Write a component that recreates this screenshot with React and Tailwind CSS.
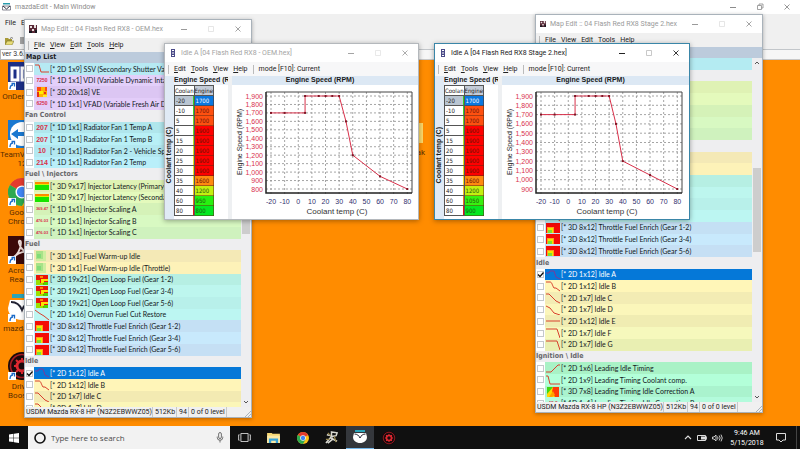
import React, { useState } from 'react'

const fuelRows = [
  { label: '[* 3D 1x1] Fuel Warm-up Idle', icon: 'fade', bg: 'bg-[#f4e9b6]' },
  { label: '[* 3D 1x1] Fuel Warm-up Idle (Throttle)', icon: 'fade', bg: 'bg-[#fdf2b8]' },
  { label: '[* 3D 19x21] Open Loop Fuel (Gear 1-2)', icon: 'loop', bg: 'bg-[#b6efe3]' },
  { label: '[* 3D 19x21] Open Loop Fuel (Gear 3-4)', icon: 'loop', bg: 'bg-[#bdf6ee]' },
  { label: '[* 3D 19x21] Open Loop Fuel (Gear 5-6)', icon: 'loop', bg: 'bg-[#b8f0ea]' },
  { label: '[* 2D 1x16] Overrun Fuel Cut Restore', icon: 'fall', bg: 'bg-[#bcf6f2]' },
  { label: '[* 3D 8x12] Throttle Fuel Enrich (Gear 1-2)', icon: 'corner', bg: 'bg-[#c4e0f4]' },
  { label: '[* 3D 8x12] Throttle Fuel Enrich (Gear 3-4)', icon: 'corner', bg: 'bg-[#c8e9fc]' },
  { label: '[* 3D 8x12] Throttle Fuel Enrich (Gear 5-6)', icon: 'corner', bg: 'bg-[#c5dff4]' },
]

const injectorRows = [
  { label: '[* 3D 9x17] Injector Latency (Primary)', icon: 'bands', bg: 'bg-[#dff2b4]' },
  { label: '[* 3D 9x17] Injector Latency (Secondary)', icon: 'bands', bg: 'bg-[#e4fabc]' },
  { label: '[* 1D 1x1] Injector Scaling A', tiny: '369.47', bg: 'bg-[#d5f2b8]' },
  { label: '[* 1D 1x1] Injector Scaling B', tiny: '476.03', bg: 'bg-[#d8f9c2]' },
  { label: '[* 1D 1x1] Injector Scaling C', tiny: '476.03', bg: 'bg-[#cff2be]' },
]

const oemRows = [
  { label: '[* 2D 1x9] SSV (Secondary Shutter Valve)', icon: 'step', bg: 'bg-[#b6e9f3]' },
  { label: '[* 1D 1x1] VDI (Variable Dynamic Intake) V', small: '7250', bg: 'bg-[#e3cffa]' },
  { label: '[* 3D 20x18] VE', icon: 've', bg: 'bg-[#dcc6f3]' },
  { label: '[* 1D 1x1] VFAD (Variable Fresh Air Duct)', small: '6250', bg: 'bg-[#e3cdf9]' },
  { group: 'Fan Control' },
  { label: '[* 1D 1x1] Radiator Fan 1 Temp A', big: '207', bg: 'bg-[#b0e6ec]' },
  { label: '[* 1D 1x1] Radiator Fan 1 Temp B', big: '207', bg: 'bg-[#b8f0f6]' },
  { label: '[* 1D 1x1] Radiator Fan 2 - Vehicle Speed', big: '10', bg: 'bg-[#b3e8f0]' },
  { label: '[* 1D 1x1] Radiator Fan 2 Temp', big: '214', bg: 'bg-[#b9effa]' },
  { group: 'Fuel \\ Injectors' },
  ...injectorRows,
  { group: 'Fuel' },
  ...fuelRows,
  { group: 'Idle' },
  { label: '[* 2D 1x12] Idle A', icon: 'idleA', selected: true },
  { label: '[* 2D 1x12] Idle B', icon: 'idleB', bg: 'bg-[#fff5b8]' },
  { label: '[* 2D 1x7] Idle C', icon: 'idleC', bg: 'bg-[#f3eab2]' },
  { label: '[* 2D 1x7] Idle D', icon: 'idleC', bg: 'bg-[#fbf6b8]' },
]

const stageRows = [
  { label: '[* 1D 1x1] Radiator Fan 2 Temp', big: '214', bg: 'bg-[#b4ebf2]' },
  { group: 'Fuel \\ Injectors' },
  ...injectorRows,
  { group: 'Fuel' },
  ...fuelRows,
  { group: 'Idle' },
  { label: '[* 2D 1x12] Idle A', icon: 'idleA', selected: true },
  { label: '[* 2D 1x12] Idle B', icon: 'idleB', bg: 'bg-[#fff6b8]' },
  { label: '[* 2D 1x7] Idle C', icon: 'idleC', bg: 'bg-[#f3ecb4]' },
  { label: '[* 2D 1x7] Idle D', icon: 'idleD', bg: 'bg-[#fbf6ba]' },
  { label: '[* 2D 1x12] Idle E', icon: 'flat', bg: 'bg-[#f0ecb2]' },
  { label: '[* 2D 1x7] Idle F', icon: 'drop', bg: 'bg-[#f6f8bc]' },
  { label: '[* 2D 1x7] Idle G', icon: 'drop', bg: 'bg-[#e9efb2]' },
  { group: 'Ignition \\ Idle' },
  { label: '[* 2D 1x6] Leading Idle Timing', icon: 'rise', bg: 'bg-[#a9f2c6]' },
  { label: '[* 2D 1x9] Leading Timing Coolant comp.', icon: 'cool', bg: 'bg-[#b3ffd9]' },
  { label: '[* 3D 7x8] Leading Timing Idle Correction A', icon: 'diag', bg: 'bg-[#aaf3ce]' },
  { label: '[* 1D 1x1] Leading Timing Idle Correction B', small: '40.0', bg: 'bg-[#b3fbdc]' },
]

const lineIcons = {
  step: 'M0 2h4l2 7h8',
  fall: 'M0 1l4 3 5 3 5 4',
  idleA: 'M0 4h3l1-2h4l2 6 4 2',
  idleB: 'M0 2h4c2 0 2 3 4 6h2l4 3',
  idleC: 'M0 2h3l3 3 4 4 4 2',
  idleD: 'M0 2l4 2 4 5 6 2',
  flat: 'M0 6h14',
  drop: 'M0 2h11l3 9',
  rise: 'M0 10h5l7-7h2',
  cool: 'M0 2h2l2 8h10',
}

function RowIcon({ name }) {
  if (lineIcons[name]) {
    return (
      <svg viewBox="0 0 14 12" className="h-3 w-[14px]" fill="none" stroke={name === 'idleA' ? '#7a3a9a' : '#d8402e'} strokeWidth="1">
        <path d={lineIcons[name]} />
      </svg>
    )
  }
  return (
    <svg viewBox="0 0 14 10" className="h-[10px] w-[14px]">
      {name === 'bands' && (
        <>
          <path d="M0 1h14v8H0z" fill="#18e400" />
          <path d="M0 1h14v2H0z" fill="#ff8a00" />
          <path d="M0 3h14v1H0z" fill="#d8f000" />
        </>
      )}
      {name === 'fade' && (
        <>
          <path d="M1 0h10v10H1z" fill="#cdeea0" />
          <path d="M1 0h7v8H1z" fill="#a8e288" />
          <path d="M2 3h4v4H2z" fill="#82dc78" />
        </>
      )}
      {name === 'loop' && (
        <>
          <path d="M1 0h12v10H1z" fill="#e81408" />
          <path d="M1 5h4v3h3v2H1z" fill="#9be000" />
          <path d="M6 4h7v2H9v2H6z" fill="#ffe000" />
          <path d="M9 7h4v3H8z" fill="#4fd800" />
          <path d="M5 1h3v2H5z" fill="#ff8a00" />
        </>
      )}
      {name === 'corner' && (
        <>
          <path d="M0 0h14v10H0z" fill="#f40a06" />
          <path d="M1 4h7v6H1z" fill="#ff9a20" />
          <path d="M2 5h5v5H2z" fill="#f0e800" />
          <path d="M2 7h4v3H2z" fill="#7fe030" />
        </>
      )}
      {name === 've' && (
        <>
          <path d="M2 0h10v10H2z" fill="#ffb000" />
          <path d="M2 0h4v4H2zM10 0h2v4h-2z" fill="#ff4a10" />
          <path d="M4 4h4v3H4z" fill="#ffee00" />
          <path d="M2 5h2v5H2zM9 5h2v2H9z" fill="#e83010" />
          <path d="M8 8h4v2H8z" fill="#ffe830" />
        </>
      )}
      {name === 'diag' && (
        <>
          <path d="M1 0h12v10H1z" fill="#ffd800" />
          <path d="M1 0h6L1 7z" fill="#40d810" />
          <path d="M7 0h6v10H9L6 5z" fill="#ff3a08" />
          <path d="M7 4l2 4-3 2H3z" fill="#ffa000" />
        </>
      )}
    </svg>
  )
}

function MapRow({ row }) {
  const [checked, setChecked] = useState(!!row.selected)

  if (row.group) {
    return (
      <div className="flex min-h-0 flex-1 items-center bg-[#eeeef0] font-['DejaVu_Sans_Condensed','DejaVu_Sans',sans-serif] text-[7px] font-bold text-[#66666a]">
        {row.group}
      </div>
    )
  }
  return (
    <label className={`flex min-h-0 flex-1 items-center whitespace-nowrap ${row.selected ? 'text-white' : 'text-[#12181c]'}`}>
      <span className="grid h-full w-[9px] shrink-0 place-items-center bg-white">
        <input
          type="checkbox"
          checked={checked}
          onChange={(e) => setChecked(e.target.checked)}
          className="col-start-1 row-start-1 h-[7px] w-[7px] appearance-none border border-[#c4c8cc] bg-white"
        />
        {checked && (
          <svg viewBox="0 0 7 7" className="pointer-events-none col-start-1 row-start-1 h-[7px] w-[7px]" fill="none" stroke="#111" strokeWidth="1.3">
            <path d="M1 3.5l2 2 3.5-4" />
          </svg>
        )}
      </span>
      <span className={`flex h-full min-w-0 flex-1 items-center gap-px overflow-hidden pl-px ${row.selected ? 'bg-[#0578d8]' : row.bg}`}>
        <span className="flex h-full w-[14px] shrink-0 items-center justify-center font-['Liberation_Sans',Arial,sans-serif] leading-none text-[#d8304a]">
          {row.icon && <RowIcon name={row.icon} />}
          {row.tiny && <b className="text-[4px]">{row.tiny}</b>}
          {row.small && <b className="text-[5px]">{row.small}</b>}
          {row.big && <b className="text-[7px]">{row.big}</b>}
        </span>
        {row.label}
      </span>
    </label>
  )
}

function WindowButtons({ restore = false }) {
  return (
    <div className="ml-auto flex self-stretch">
      <button type="button" aria-label="Minimize" className="grid w-[27px] place-items-center">
        <svg viewBox="0 0 8 8" className="h-2 w-2" fill="none" stroke="currentColor"><path d="M1 4.5h6" /></svg>
      </button>
      <button type="button" aria-label="Maximize" className={`grid w-[27px] place-items-center ${restore ? '' : 'opacity-30'}`}>
        <svg viewBox="0 0 8 8" className="h-2 w-2" fill="none" stroke="currentColor" strokeWidth=".8">
          {restore ? <path d="M1.5 2.5h4v4h-4zM3 2.5V1h4v4H5.5" /> : <path d="M1.5 1.5h5v5h-5z" />}
        </svg>
      </button>
      <button type="button" aria-label="Close" className="grid w-[27px] place-items-center">
        <svg viewBox="0 0 8 8" className="h-2 w-2" fill="none" stroke="currentColor" strokeWidth=".9"><path d="M1.5 1.5l5 5M6.5 1.5l-5 5" /></svg>
      </button>
    </div>
  )
}

function MenuItem({ children }) {
  return (
    <button type="button" className="first-letter:underline">
      {children}
    </button>
  )
}

function MapWindow({ title, rows, thumb, className }) {
  return (
    <section className={`absolute flex w-[228px] flex-col border border-[#a9b2ba] bg-[#f0f0f0] font-[Lato,sans-serif] text-[7px] shadow-[0_1px_4px_rgba(0,0,0,0.3)] ${className}`}>
      <header className="flex h-[18px] items-center gap-1 bg-white pl-1 text-[#9a9a9a]">
        <svg viewBox="0 0 8 8" className="h-2 w-2">
          <path d="M0 0h8v8H0z" fill="#5a2a38" />
          <path d="M1 1h2v2H1zM5 0h2v3H5zM3 4h2v2H3z" fill="#e8e0e0" />
          <path d="M0 6h3v2H0zM6 5h2v3H6z" fill="#181820" />
        </svg>
        <span className="font-[Roboto,sans-serif] text-[7px] whitespace-nowrap">{title}</span>
        <WindowButtons />
      </header>
      <nav className="flex h-[14px] items-center gap-[5px] pl-[3px] font-[Roboto,sans-serif] text-[7px] text-[#222]">
        <span className="h-[9px] w-px bg-[#bbb]" />
        <MenuItem>File</MenuItem>
        <MenuItem>View</MenuItem>
        <MenuItem>Edit</MenuItem>
        <MenuItem>Tools</MenuItem>
        <MenuItem>Help</MenuItem>
      </nav>
      <h2 className="flex h-[11px] items-center bg-[#bccbdc] pl-px font-['DejaVu_Sans_Condensed','DejaVu_Sans',sans-serif] text-[7px] font-bold text-[#1a1a22]">
        Map List
      </h2>
      <div className="flex h-[344px] bg-[#eeeef0]">
        <div className="min-w-0 flex-1 overflow-hidden">
          <div className="flex h-[351px] flex-col">
            {rows.map((row, i) => (
              <MapRow key={i} row={row} />
            ))}
          </div>
        </div>
        <div className="flex w-[10px] flex-col items-center py-[3px]">
          <svg viewBox="0 0 6 4" className="h-1 w-[6px]" fill="none" stroke="#555"><path d="M1 3l2-2 2 2" /></svg>
          <span className={`w-2 bg-[#cdcdcd] ${thumb}`} />
          <svg viewBox="0 0 6 4" className="mt-auto h-1 w-[6px]" fill="none" stroke="#555"><path d="M1 1l2 2 2-2" /></svg>
        </div>
      </div>
      <footer className="flex h-[10px] items-center bg-[#f0f0f0] font-[Roboto,sans-serif] text-[7px] whitespace-nowrap text-[#222]">
        <span className="w-[128px] border-r border-[#c8c8c8] pl-px">USDM Mazda RX-8 HP (N3Z2EBWWZ05)</span>
        <span className="w-[24px] border-r border-[#c8c8c8] pl-[2px]">512Kb</span>
        <span className="w-[12px] border-r border-[#c8c8c8] pl-[2px]">94</span>
        <span className="w-[38px] border-r border-[#c8c8c8] pl-[2px]">0 of 0 level</span>
        <svg viewBox="0 0 6 6" className="mt-auto ml-auto h-[6px] w-[6px]" stroke="#aab4bc"><path d="M0 6l6-6M3 6l3-3" /></svg>
      </footer>
    </section>
  )
}

const temps = [-20, -10, 5, 5, 15, 20, 25, 30, 35, 40, 60, 80]

const rpmColors = {
  1700: 'bg-[#ff5010]',
  1900: 'bg-[#ff0000]',
  1600: 'bg-[#ff8a10]',
  1200: 'bg-[#c4f010]',
  1050: 'bg-[#38f010]',
  950: 'bg-[#28f010]',
  900: 'bg-[#04e820]',
  800: 'bg-[#04e820]',
}

const tempEdge = ['#30d020', '#40d820', '#70dc20', '#70dc20', '#b8e020', '#d8e020', '#e8e020', '#f0e020', '#f0e020', '#f0c020', '#f07020', '#e01818']

function Chart({ rpm, low }) {
  const left = 34
  const right = 180
  const top = 7
  const bottom = 108
  const x = (t) => left + 5 + (t + 20) * 1.363
  const y = (r) => 104 - ((r - low) * 93) / (1900 - low)
  const levels = []
  for (let r = low; r <= 1900; r += 100) levels.push(r)
  const ticks = [-20, -10, 0, 10, 20, 30, 40, 50, 60, 70, 80]

  return (
    <svg viewBox="0 0 184 134" className="h-[134px] w-[184px] font-['Liberation_Sans',Arial,sans-serif]">
      {levels.map((r) => (
        <g key={r}>
          <path d={`M${left} ${y(r)}H${right}`} stroke="#8e8e8e" strokeWidth=".8" strokeDasharray="2 2" />
          <text x="31" y={y(r) + 2.5} textAnchor="end" fontSize="7" fill="#d8304c">{r.toLocaleString('en-US')}</text>
        </g>
      ))}
      {ticks.map((t) => (
        <g key={t}>
          <path d={`M${x(t)} ${top}V${bottom + 2}`} stroke="#8e8e8e" strokeWidth=".8" strokeDasharray="2 2" />
          <text x={x(t)} y="119" textAnchor="middle" fontSize="7" fill="#30306e">{t}</text>
        </g>
      ))}
      <path d={`M${left} ${top}H${right}V${bottom}`} fill="none" stroke="#444" />
      <path d={`M${left} ${top}V${bottom}H${right}`} fill="none" stroke="#222" strokeWidth="1.5" />
      <polyline points={temps.map((t, i) => `${x(t)},${y(rpm[i])}`).join(' ')} fill="none" stroke="#d8304a" strokeWidth="1" />
      {temps.map((t, i) => (
        <rect key={i} x={x(t) - 1} y={y(rpm[i]) - 1} width="2" height="2" fill="#801424" />
      ))}
      <text x="105" y="129" textAnchor="middle" fontSize="8" fill="#333">Coolant temp (C)</text>
      <text transform="translate(10 57) rotate(-90)" textAnchor="middle" fontSize="7" fill="#222">Engine Speed (RPM)</text>
    </svg>
  )
}

function IdleWindow({ title, rpm, low, active, className }) {
  return (
    <section className={`absolute flex flex-col border bg-white ${active ? 'border-[#3a86a8] text-[#222]' : 'border-[#b4b8bc] text-[#a4a4a4]'} shadow-[0_1px_5px_rgba(0,0,0,0.35)] ${className}`}>
      <header className="flex h-[18px] items-center gap-[6px] pl-[6px]">
        <svg viewBox="0 0 4 8" className="h-2 w-1">
          <path d="M0 0h4v8H0z" fill="#4a4a88" />
          <path d="M1 1h2v1H1zM1 3.5h2v1H1zM1 6h2v1H1z" fill="#fff" />
        </svg>
        <span className="font-[Roboto,sans-serif] text-[7px] whitespace-nowrap">{title}</span>
        <WindowButtons />
      </header>
      <nav className="flex h-[14px] items-center gap-[5px] bg-[#f7f7f8] pl-[3px] font-[Roboto,sans-serif] text-[7px] text-[#222]">
        <span className="h-[9px] w-px bg-[#bbb]" />
        <MenuItem>Edit</MenuItem>
        <MenuItem>Tools</MenuItem>
        <MenuItem>View</MenuItem>
        <MenuItem>Help</MenuItem>
        <span className="h-[9px] w-px bg-[#bbb]" />
        <span className="whitespace-nowrap">mode [F10]: Current</span>
      </nav>
      <div className="flex text-[#1a1a1a]">
        <div className="flex w-[9px] items-center justify-center bg-[#e0eaf5] pt-4">
          <span className="rotate-180 font-['Liberation_Sans',Arial,sans-serif] text-[7px] font-bold whitespace-nowrap [writing-mode:vertical-rl]">Coolant temp (C)</span>
        </div>
        <div className="w-[54px] overflow-hidden">
          <div className="flex h-[9px] items-center bg-[#edf2f9] font-['Liberation_Sans',Arial,sans-serif] text-[7px] font-bold whitespace-nowrap">Engine Speed (RPM)</div>
          <table className="w-[40px] table-fixed border-collapse font-['DejaVu_Sans_Condensed','DejaVu_Sans',sans-serif] text-[6px] leading-none">
            <thead>
              <tr className="h-[10px]">
                <th className="overflow-hidden border border-[#555] p-0 text-left font-normal">Coolan</th>
                <th className="overflow-hidden border border-[#555] bg-[#c4ccd8] p-0 text-left font-normal">Engine</th>
              </tr>
            </thead>
            <tbody>
              {temps.map((t, i) => (
                <tr key={i} className="h-[10px]">
                  <td className={`border border-[#555] p-0 ${i === 0 ? 'bg-[#b9c5d2]' : 'bg-white'}`}>
                    <span className="block h-[9px] border-r border-solid pl-px leading-[9px]" style={{ borderRightColor: tempEdge[i] }}>{t}</span>
                  </td>
                  <td className={`border border-[#5a2a10]/50 p-0 pl-px ${i === 0 ? 'bg-[#0a78e0] text-white' : rpmColors[rpm[i]]} ${i > 0 && rpm[i] >= 1600 ? 'text-[#6a1408]' : ''} ${rpm[i] < 1600 ? 'text-[#1c5a10]' : ''}`}>
                    {rpm[i]}
                  </td>
                </tr>
              ))}
            </tbody>
          </table>
        </div>
        <div className="w-1 bg-[#eef0f2]" />
        <div className="flex-1">
          <h3 className="flex h-[9px] items-center justify-center bg-[#dce8f4] pr-[10px] font-['Liberation_Sans',Arial,sans-serif] text-[7px] font-bold">
            Engine Speed (RPM)
          </h3>
          <Chart rpm={rpm} low={low} />
        </div>
      </div>
    </section>
  )
}

function ChromeLogo({ className }) {
  return (
    <svg viewBox="0 0 24 24" className={className}>
      <circle cx="12" cy="12" r="12" fill="#fbc116" />
      <path d="M12 12L1.6 6A12 12 0 0 1 22.4 6z" fill="#e33b2e" />
      <path d="M12 12L1.6 6A12 12 0 0 0 12 24l5-9z" fill="#2da94f" />
      <circle cx="12" cy="12" r="5.6" fill="#fff" />
      <circle cx="12" cy="12" r="4.4" fill="#4285f4" />
    </svg>
  )
}

function MazdaLogo({ className }) {
  return (
    <svg viewBox="0 0 28 28" className={className}>
      <path d="M4 0h20v4H4z" fill="#2aa4b8" />
      <path d="M2 6h24l2 8c0 7-6 12-14 12S0 21 0 14z" fill="#fff" />
      <path d="M3 8c5 0 9 3 11 8 2-5 6-8 11-8" fill="none" stroke="#223" strokeWidth="2" />
    </svg>
  )
}

function DriverLogo({ className }) {
  return (
    <svg viewBox="0 0 28 28" className={className}>
      <circle cx="14" cy="14" r="14" fill="#1a0a0c" />
      <circle cx="14" cy="14" r="11.5" fill="none" stroke="#a81c24" strokeWidth="1.6" />
      <circle cx="14" cy="14" r="5" fill="none" stroke="#e02830" strokeWidth="3" />
      <path d="M14 6v4M14 18v4M6 14h4M18 14h4M8 8l3 3M17 17l3 3M8 20l3-3M17 11l3-3" stroke="#e02830" strokeWidth="2" />
    </svg>
  )
}

const shortcuts = [
  {
    name: 'OnDemand',
    icon: (
      <svg viewBox="0 0 28 28" className="h-7 w-7">
        <path d="M0 0h28v28H0z" fill="#1c2f86" />
        <path d="M4 6h6v12H4zM14 6h4q5 0 5 6t-5 6h-4z" fill="none" stroke="#fff" strokeWidth="3" />
      </svg>
    ),
  },
  {
    name: 'TeamViewer 12',
    icon: (
      <svg viewBox="0 0 28 28" className="h-7 w-7">
        <path d="M0 0h28v28H0z" fill="#1a78d0" />
        <circle cx="14" cy="14" r="12" fill="#fff" />
        <path d="M3 14l7-5v3h8V9l7 5-7 5v-3h-8v3z" fill="#1a78d0" />
      </svg>
    ),
  },
  { name: 'Google Chrome', icon: <ChromeLogo className="h-7 w-7" /> },
  {
    name: 'Acrobat Reader',
    icon: (
      <svg viewBox="0 0 28 28" className="h-7 w-7">
        <path d="M0 0h28v28H0z" fill="#3c0a08" />
        <path d="M4 22c5-2 9-9 9-15 0-3-3-3-2 0 2 7 8 12 14 10-7-3-15-1-20 5" fill="none" stroke="#e8d8d4" strokeWidth="1.8" />
      </svg>
    ),
  },
  { name: 'mazdaEdit', icon: <MazdaLogo className="h-7 w-7" /> },
  { name: 'Driver Booster', icon: <DriverLogo className="h-7 w-7" /> },
]

function Shortcut({ name, icon }) {
  return (
    <a href="#" className="flex h-[58px] w-[44px] flex-col items-center">
      <span className="grid">
        <span className="col-start-1 row-start-1">{icon}</span>
        <svg viewBox="0 0 8 8" className="col-start-1 row-start-1 h-2 w-2 self-end">
          <path d="M0 0h8v8H0z" fill="#fff" />
          <path d="M2 7c0-3 1-4 3-4M3.5 1.5H6.5V4.5" fill="none" stroke="#1a6ac8" strokeWidth="1.3" />
        </svg>
      </span>
      <span className="mt-[2px] text-center text-[8px] leading-[9px] text-[#5a2c00]">{name}</span>
    </a>
  )
}

function MainWindow() {
  return (
    <section className="flex flex-col font-[Roboto,sans-serif]">
      <header className="flex h-[14px] items-center gap-1 bg-white pl-[2px] text-[#8c8c8c]">
        <svg viewBox="0 0 9 8" className="h-2 w-[9px]">
          <path d="M1 0h7v1.5H1z" fill="#2a9cae" />
          <path d="M.5 3h8v4h-8z" fill="#fff" stroke="#556" strokeWidth=".7" />
          <path d="M1 3l3.5 3L8 3" fill="none" stroke="#334" />
        </svg>
        <span className="text-[7px]">mazdaEdit - Main Window</span>
        <WindowButtons restore />
      </header>
      <div className="border-b border-[#c2c6ca] bg-[#f0f0f0]">
        <nav className="flex h-[18px] items-center gap-[5px] pl-[5px] text-[7px] text-[#222]">
          <button type="button">File</button>
          <button type="button">Edit</button>
        </nav>
        <div className="flex h-[17px] items-center gap-[6px] pl-[5px]">
          <svg viewBox="0 0 9 8" className="h-2 w-[9px]">
            <path d="M0 1h3l1 1h3v5H0z" fill="#a89a38" />
            <path d="M2 4h7L7 8H0z" fill="#e8dc78" stroke="#6a6420" strokeWidth=".5" />
            <path d="M5 1.5q2-2 3 0" fill="none" stroke="#444" strokeWidth=".7" />
          </svg>
          <span className="h-[7px] w-2 bg-[#a0a0a0]" />
        </div>
      </div>
      <div className="flex h-[10px] items-center border-b border-[#c8c8c8] bg-[#f6f6f6] text-[7px] text-[#333]">
        <span className="border border-[#b8b8b8] bg-white px-px leading-[9px]">ver 3.6.2</span>
      </div>
    </section>
  )
}

function Taskbar() {
  return (
    <footer className="z-10 flex h-[23px] shrink-0 items-stretch bg-[#101010] font-['Open_Sans',sans-serif] text-white">
      <button type="button" aria-label="Start" className="grid w-7 place-items-center">
        <svg viewBox="0 0 10 10" className="h-[10px] w-[10px]" fill="#fff"><path d="M0 1.4L4.5.8v3.9H0zM5 .7L10 0v4.7H5zM0 5.2h4.5v3.9L0 8.6zM5 5.2h5V10l-5-.7z" /></svg>
      </button>
      <label className="flex w-[202px] items-center gap-[5px] bg-[#f2f2f2] px-[6px]">
        <svg viewBox="0 0 12 12" className="h-3 w-3 shrink-0" fill="none" stroke="#111" strokeWidth="1.6"><circle cx="6" cy="6" r="5" /></svg>
        <input type="text" aria-label="Search" placeholder="Type here to search" className="min-w-0 flex-1 bg-transparent text-[8px] outline-none placeholder:text-[#4a4a4a]" />
        <svg viewBox="0 0 8 12" className="h-[11px] w-2 shrink-0" fill="none" stroke="#555" strokeWidth=".9">
          <rect x="2.5" y=".6" width="3" height="6.5" rx="1.5" />
          <path d="M1 5v1q0 3 3 3t3-3V5M4 9v2.5" />
        </svg>
      </label>
      <button type="button" aria-label="Task view" className="grid w-[29px] place-items-center">
        <svg viewBox="0 0 14 10" className="h-[9px] w-[13px]" fill="none" stroke="#ddd" strokeWidth="1"><path d="M3 .5h8v9H3zM1.5 2h-1v6h1M12.5 2h1v6h-1" /></svg>
      </button>
      <button type="button" aria-label="File Explorer" className="grid w-[29px] place-items-center">
        <svg viewBox="0 0 14 12" className="h-[11px] w-[13px]">
          <path d="M0 1h5l1 1h8v10H0z" fill="#f6d774" />
          <path d="M0 4h14v8H0z" fill="#fbe9a6" />
          <path d="M2 7h10v5H9.5V9.5h-5V12H2z" fill="#38a4d8" />
        </svg>
      </button>
      <button type="button" aria-label="Chrome" className="grid w-[29px] place-items-center">
        <ChromeLogo className="h-3 w-3" />
      </button>
      <button type="button" aria-label="Tuner" className="grid w-[29px] place-items-center">
        <svg viewBox="0 0 14 14" className="h-[13px] w-[13px]" fill="none">
          <path d="M1 13l5-6 2 2-5 4M7 1l6 1-1 3-5 1zM2 4l4 1 3 4 4 2" stroke="#d8d8d0" strokeWidth="1.6" />
          <path d="M3 2l3 3M10 6l2 6M1 9h4" stroke="#9a8a50" strokeWidth="1.4" />
        </svg>
      </button>
      <button type="button" aria-label="mazdaEdit" className="grid w-[28px] place-items-center border-b border-[#76b9ed] bg-[#34373c]">
        <MazdaLogo className="h-[14px] w-[14px]" />
      </button>
      <button type="button" aria-label="Driver Booster" className="grid w-[29px] place-items-center">
        <DriverLogo className="h-[14px] w-[14px]" />
      </button>

      <div className="ml-auto flex items-center gap-[5px] pr-[3px]">
        <svg viewBox="0 0 8 5" className="h-[5px] w-2" fill="none" stroke="#ddd" strokeWidth="1.1"><path d="M1 4l3-3 3 3" /></svg>
        <svg viewBox="0 0 10 6" className="h-[6px] w-[10px]"><path d="M.5.5h8v5h-8zM9 2h1v2H9z" fill="none" stroke="#ddd" /><path d="M4 1.5h4v3H4z" fill="#ddd" /></svg>
        <svg viewBox="0 0 11 8" className="h-2 w-[11px]" fill="none" stroke="#ddd" strokeWidth=".9"><path d="M.5 3H2l2-2v6L2 5H.5zM5.5 2.5q1 1.5 0 3M7.2 1.5q2 2.5 0 5M9 .6q2.5 3.4 0 6.8" /></svg>
        <div className="flex w-[38px] flex-col items-center font-[Roboto,sans-serif] text-[7px] leading-[10px] whitespace-nowrap">
          <span>9:46 AM</span>
          <span>5/15/2018</span>
        </div>
        <button type="button" aria-label="Notifications" className="grid w-[20px] place-items-center">
          <svg viewBox="0 0 10 10" className="h-[10px] w-[10px]" fill="none" stroke="#ddd"><path d="M.5.5h9V7H7L5 9 3 7H.5z" /></svg>
        </button>
        <span className="h-[23px] w-px bg-[#444]" />
      </div>
    </footer>
  )
}

export default function App() {
  return (
    <div className="flex min-h-screen w-full flex-col overflow-hidden bg-[#ff8c00]">
      <main className="relative flex-1">
        <MainWindow />
        <div className="flex w-[44px] flex-col pt-[2px] font-[Roboto,sans-serif]">
          {shortcuts.map((s) => (
            <Shortcut key={s.name} {...s} />
          ))}
        </div>

        {/* Desktop folder, mostly behind the windows */}
        <a href="#" className="absolute top-[123px] left-[395px] flex w-[30px] flex-col items-end font-[Roboto,sans-serif] text-[8px] text-[#5a2c00]">
          <span className="mr-[2px] h-5 w-6 bg-[#fbd76a]" />
          <span className="mt-1">break</span>
        </a>

        {/* Open windows, back to front */}
        <MapWindow title="Map Edit :: 04 Flash Red RX8 - OEM.hex" rows={oemRows} thumb="mt-[4px] h-[160px]" className="top-[19px] left-[24px]" />
        <MapWindow title="Map Edit :: 04 Flash Red RX8 Stage 2.hex" rows={stageRows} thumb="mt-[103px] h-[84px]" className="top-[14px] left-[535px]" />
        <IdleWindow
          title="Idle A [04 Flash Red RX8 - OEM.hex]"
          rpm={[1700, 1700, 1700, 1900, 1900, 1900, 1900, 1900, 1600, 1200, 950, 800]}
          low={800}
          className="top-[43px] left-[164px] w-[255px]"
        />
        <IdleWindow
          title="Idle A [04 Flash Red RX8 Stage 2.hex]"
          rpm={[1700, 1700, 1700, 1900, 1900, 1900, 1900, 1900, 1600, 1200, 1050, 900]}
          low={900}
          active
          className="top-[43px] left-[434px] w-[256px]"
        />
      </main>
      <Taskbar />
    </div>
  )
}
